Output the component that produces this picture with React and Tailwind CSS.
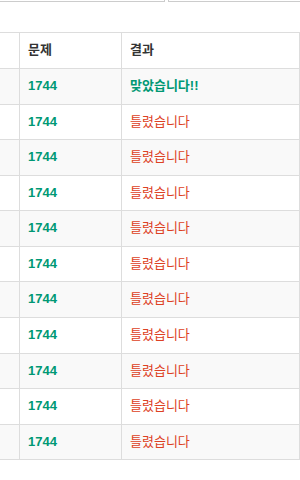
import React from 'react';

const rows = [
  { id: 1744, ok: true },
  ...Array.from({ length: 10 }, () => ({ id: 1744, ok: false })),
];

const font = { fontFamily: '"Liberation Sans", "Noto Sans CJK KR", sans-serif' };

export default function App() {
  return (
    <div className="w-[300px] h-[480px] bg-white overflow-hidden text-[13px] leading-[1.42857] text-[#333]" style={font}>
      {/* bottoms of the filter boxes above */}
      <div className="flex gap-[3px]">
        <div className="w-[165px] h-[2px] border-r border-b border-[#ccc]" />
        <div className="flex-1 h-[2px] border-l border-b border-[#ccc]" />
      </div>

      <div className="mt-[30px] overflow-hidden">
        <table className="w-[341px] -ml-[41px] border-collapse">
          <thead>
            <tr className="h-[36px]">
              <th className="w-[60px] border border-[#ddd]" />
              <th className="w-[102px] border border-[#ddd] px-2 text-left font-bold">문제</th>
              <th className="border border-[#ddd] px-2 text-left font-bold">결과</th>
            </tr>
          </thead>
          <tbody>
            {rows.map((r, i) => (
              <tr key={i} className={i % 2 === 0 ? 'bg-[#f9f9f9]' : 'bg-white'}>
                <td className="border border-[#ddd] py-2" />
                <td className="border border-[#ddd] px-2 py-2 font-bold text-[#009874]">{r.id}</td>
                <td className="border border-[#ddd] px-2 py-2">
                  {r.ok ? (
                    <span className="font-bold text-[#009874]">맞았습니다!!</span>
                  ) : (
                    <span className="text-[#dd4124]">틀렸습니다</span>
                  )}
                </td>
              </tr>
            ))}
          </tbody>
        </table>
      </div>
    </div>
  );
}
